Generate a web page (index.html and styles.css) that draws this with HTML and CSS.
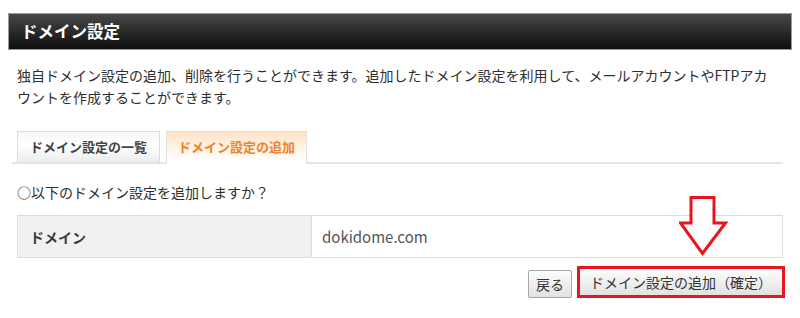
FILE: index.html
```html
<!DOCTYPE html>
<html lang="ja">
<head>
<meta charset="utf-8">
<link rel="stylesheet" href="styles.css">
</head>
<body>
<div class="page">
  <h1 class="title">ドメイン設定</h1>
  <div class="content">
    <p class="desc">独自ドメイン設定の追加、削除を行うことができます。追加したドメイン設定を利用して、メールアカウントやFTPアカウントを作成することができます。</p>
    <div class="tabs">
      <div class="tab">ドメイン設定の一覧</div>
      <div class="tab active">ドメイン設定の追加</div>
    </div>
    <p class="question">○以下のドメイン設定を追加しますか？</p>
    <table class="info">
      <tr>
        <th>ドメイン</th>
        <td>dokidome.com</td>
      </tr>
    </table>
    <div class="actions">
      <button class="btn">戻る</button>
      <button class="btn confirm">ドメイン設定の追加（確定）</button>
    </div>
  </div>
  <svg class="arrow" width="50" height="62" viewBox="0 0 50 62">
    <polygon points="12,1.5 35,1.5 35,27 46.5,27 23.5,57.5 1.5,27 12,27" fill="#fff" stroke="#e8141e" stroke-width="3" stroke-linejoin="miter"/>
  </svg>
</div>
</body>
</html>
```

FILE: styles.css
```css
* { box-sizing: border-box; }
html, body { margin: 0; padding: 0; background: #fff; }
body {
  font-family: "Noto Sans CJK JP", "Noto Sans", sans-serif;
  color: #333;
  width: 800px;
  height: 318px;
  overflow: hidden;
}
.page {
  position: relative;
  padding: 13px 8px 0 8px;
}
.title {
  margin: 0;
  height: 37px;
  border: 1px solid #9a9a9a;
  background: linear-gradient(#474747, #0e0e0e);
  color: #fff;
  font-size: 16.5px;
  font-weight: bold;
  line-height: 35px;
  padding-left: 12px;
}
.content {
  padding: 0 9px;
}
.desc {
  margin: 14px 0 0 0;
  padding-right: 12px;
  font-size: 14px;
  line-height: 22px;
  color: #2e2e2e;
}
.tabs {
  display: flex;
  gap: 6px;
  margin: 23px 0 0 -5px;
  padding-left: 5px;
  border-bottom: 2px solid #e4e4e4;
  height: 33px;
}
.tab {
  height: 31px;
  padding: 0 12px;
  border: 1px solid #dcdcdc;
  border-bottom: none;
  background: linear-gradient(#f7f7f7, #fff 45%, #ececec);
  font-size: 13px;
  font-weight: bold;
  line-height: 30px;
  color: #444;
}
.tab.active {
  height: 33px;
  padding: 0 11px;
  background: linear-gradient(#ffe3c6, #fff 90%);
  color: #f08228;
  border-color: #e2e2e2;
}
.question {
  margin: 18px 0 0 0;
  font-size: 14px;
  line-height: 20px;
  color: #2e2e2e;
}
.info {
  margin-top: 13px;
  width: 100%;
  border-collapse: collapse;
  border: 1px solid #dcdcdc;
}
.info th, .info td {
  height: 42px;
  border: 1px solid #dcdcdc;
  font-size: 14px;
  text-align: left;
  padding: 0 0 0 12px;
}
.info th {
  width: 294px;
  background: #f1f1f1;
  font-weight: bold;
  color: #3a3a3a;
}
.info td {
  padding-left: 10px;
  font-size: 15px;
  color: #555;
}
.actions {
  display: flex;
  justify-content: flex-end;
  align-items: flex-end;
  gap: 5px;
  margin-top: 8px;
  margin-right: -2px;
}
.btn {
  font-family: "Noto Sans CJK JP", "Noto Sans", sans-serif;
  font-size: 14px;
  color: #333;
  height: 28px;
  padding: 0 7px;
  border: 1px solid #a8a8a8;
  border-radius: 2px;
  background: linear-gradient(#fdfdfd, #e2e2e2);
  line-height: 24px;
}
.btn.confirm {
  height: 32px;
  padding: 0 10px;
  border: 3px solid #e8141e;
  border-radius: 0;
  line-height: 24px;
}
.arrow {
  position: absolute;
  left: 679px;
  top: 196px;
}
```
